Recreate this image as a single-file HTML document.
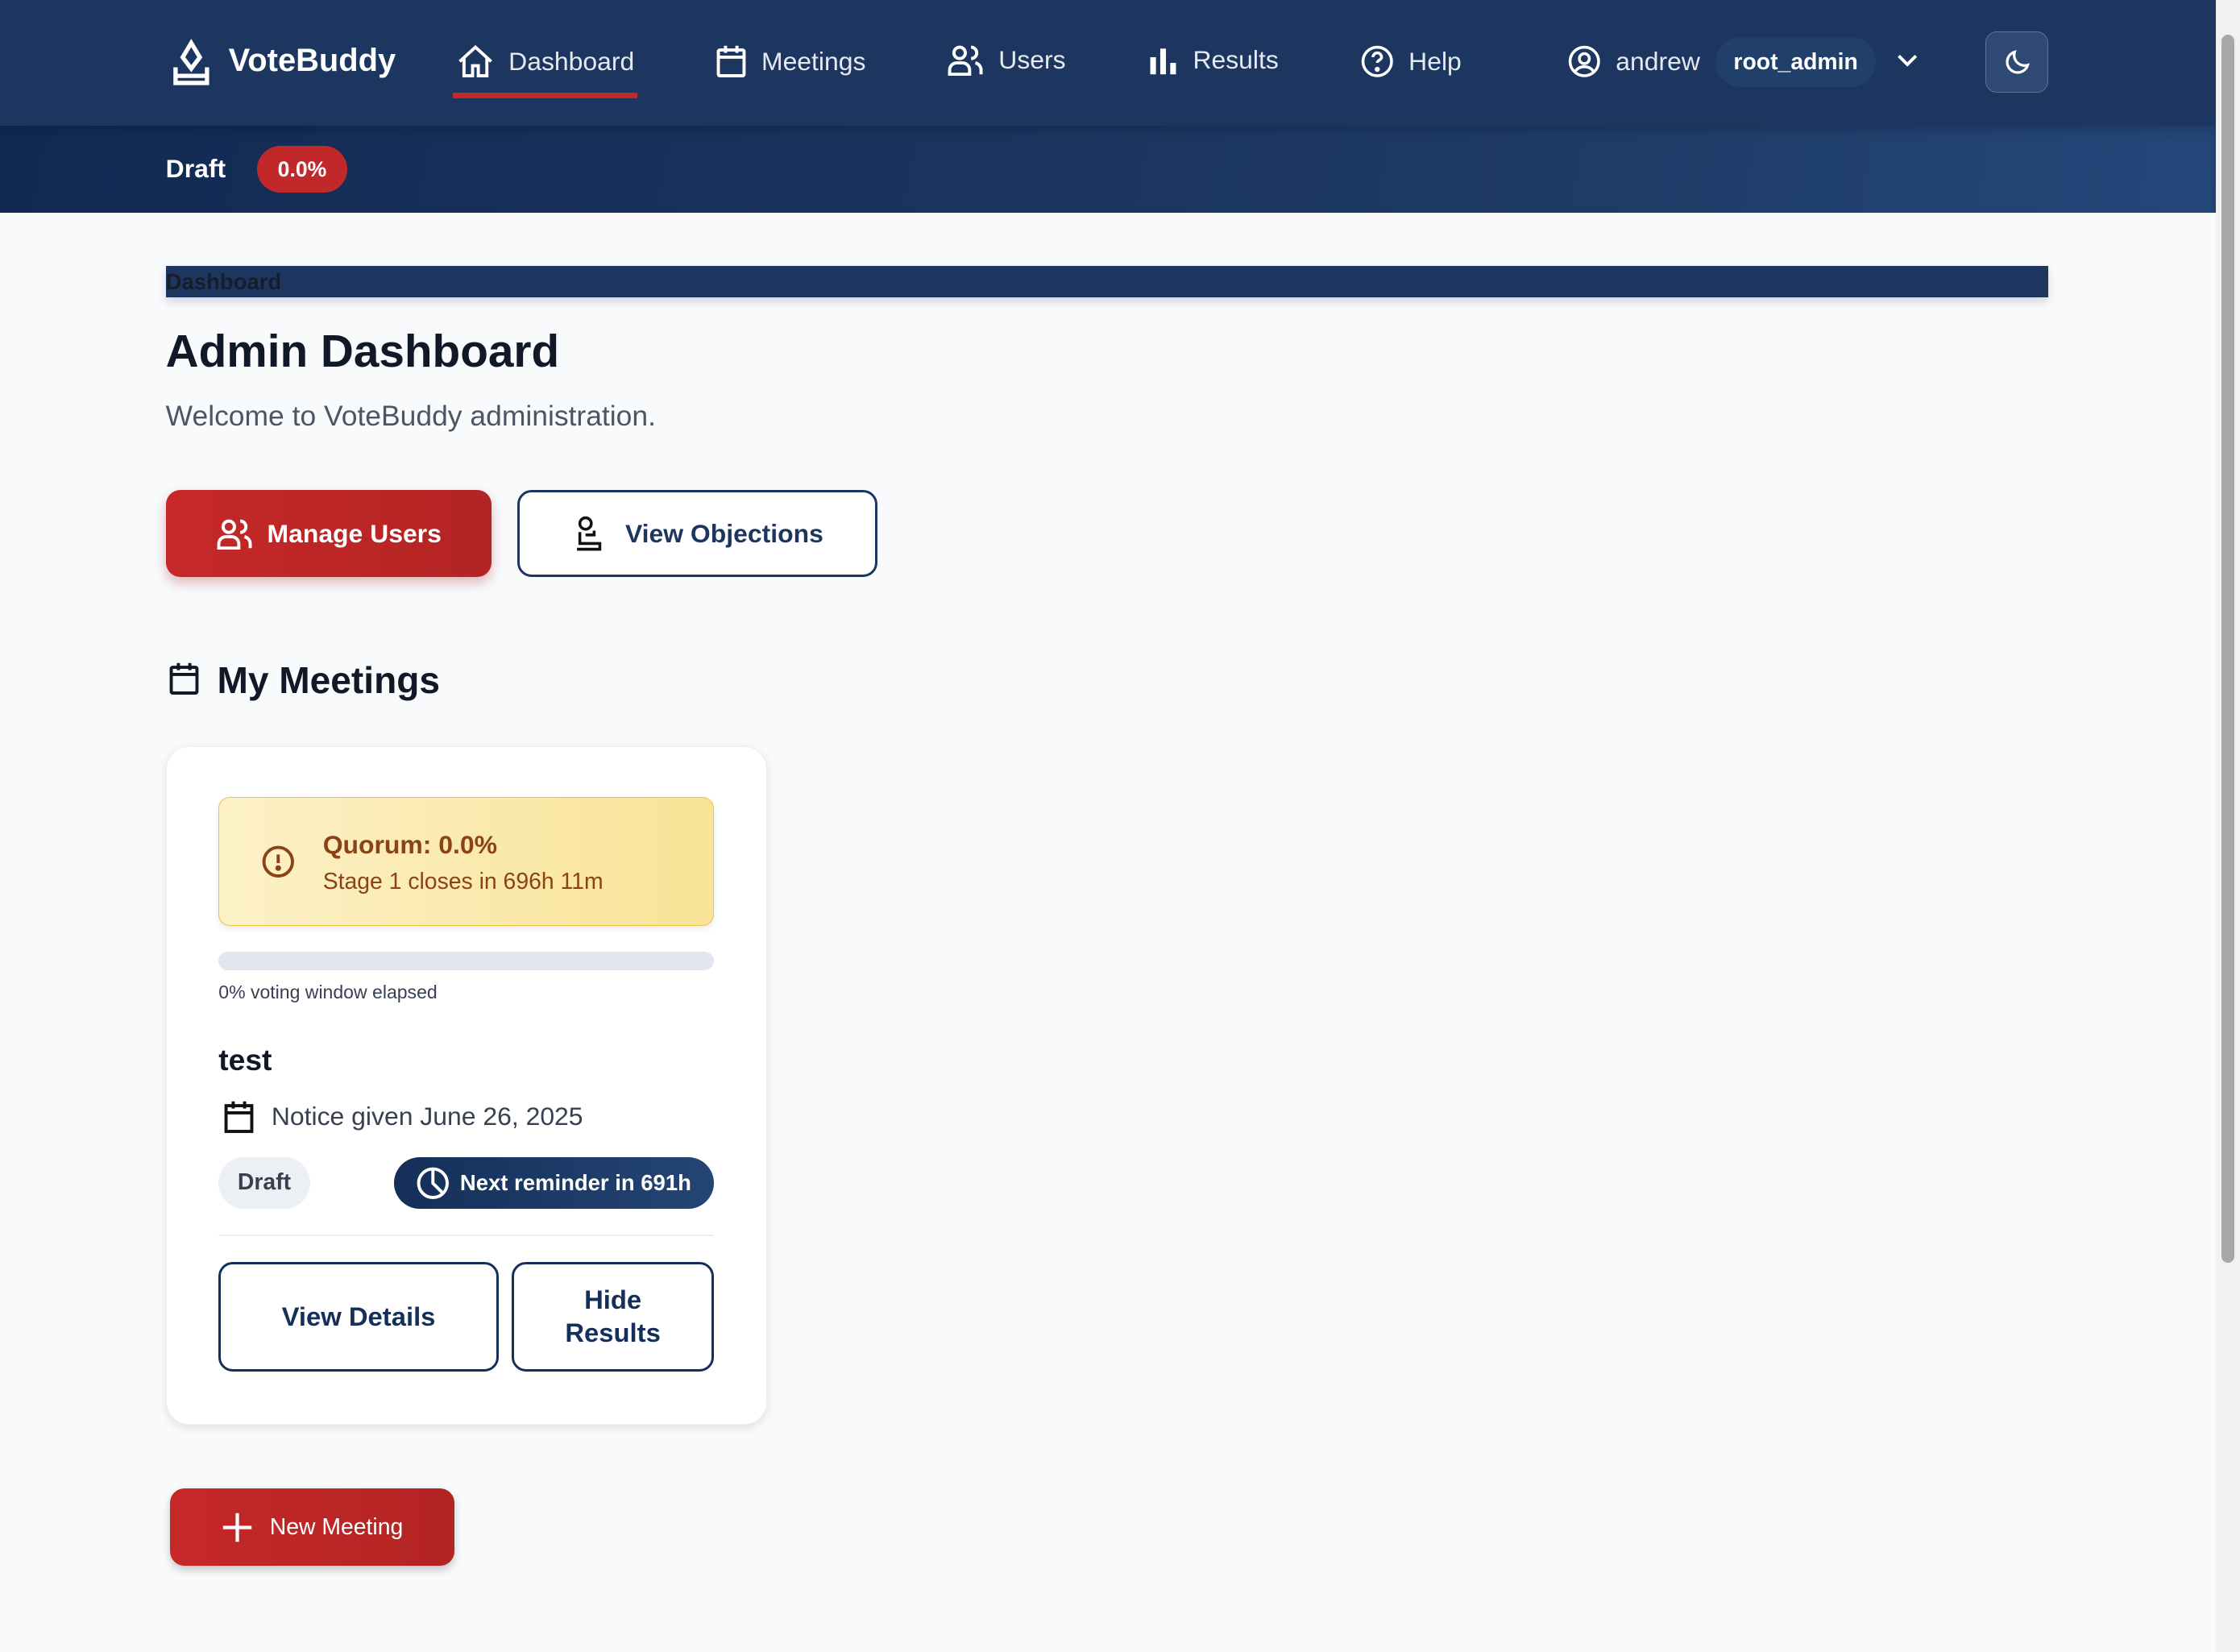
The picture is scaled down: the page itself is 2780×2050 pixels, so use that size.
<!DOCTYPE html>
<html><head><meta charset="utf-8"><style>
html{zoom:1.7730}
*{box-sizing:border-box;margin:0;padding:0}
body{width:1568px;height:1156px;overflow:hidden;background:#f8fafc;font-family:"Liberation Sans",sans-serif;position:relative}
.hdr{position:absolute;left:0;top:0;width:1551px;height:88px;background:#1d365f}
.sub{position:absolute;left:0;top:88px;width:1551px;height:61px;background:linear-gradient(100deg,#112a52,#1e3b66 70%,#24477a);box-shadow:inset 0 4px 6px rgba(0,0,0,.15)}
.abs{position:absolute}
.nav{color:#e5e9f0;font-size:18px;display:flex;align-items:center;gap:10px;top:31px}
svg{display:block}
.sb{position:absolute;left:1551px;top:0;width:17px;height:1156px;background:#f1f1f1}
.sb div{position:absolute;left:4px;top:24px;width:9px;height:860px;background:#a8a8a8;border-radius:5px}
.btn{position:absolute;border-radius:10px;display:flex;align-items:center;justify-content:center;font-weight:bold;font-size:18px}
</style></head><body>
<div class="hdr"></div>
<div class="sub"></div>
<div class="abs" style="left:118px;top:27px"><svg width="32" height="34" viewBox="0 0 32 34" fill="none" stroke="#fff" stroke-width="3"><path d="M16 3l6 10-6 8-6-8z"/><path d="M5 20v11h22V20"/><path d="M5 26h22"/></svg></div>
<div class="abs" style="left:160px;top:30px;color:#fff;font-weight:bold;font-size:22.5px">VoteBuddy</div>
<div class="abs nav" style="left:320px"><svg width="26" height="24" viewBox="0 0 26 24" fill="none" stroke="#fff" stroke-width="2.2"><path d="M2 12L13 2l11 10M5 10v12h6v-7h4v7h6V10"/></svg>Dashboard</div>
<div class="abs" style="left:317px;top:65px;width:129px;height:4px;background:#c62828"></div>
<div class="abs nav" style="left:501px"><svg width="22" height="24" viewBox="0 0 22 24" fill="none" stroke="#fff" stroke-width="2.2"><rect x="2" y="4" width="18" height="18" rx="1"/><path d="M2 9h18M7 1v5M15 1v5"/></svg>Meetings</div>
<div class="abs nav" style="left:663px"><svg width="26" height="22" viewBox="0 0 26 22" fill="none" stroke="#fff" stroke-width="2.2"><circle cx="9" cy="6" r="4"/><path d="M2 21v-3a5 5 0 015-5h4a5 5 0 015 5v3zM17 2a4 4 0 010 8M20 13a5 5 0 014 5v3"/></svg>Users</div>
<div class="abs nav" style="left:803px"><svg width="22" height="22" viewBox="0 0 22 22" fill="#fff"><rect x="2" y="9" width="4" height="12"/><rect x="9" y="3" width="4" height="18"/><rect x="16" y="13" width="4" height="8"/></svg>Results</div>
<div class="abs nav" style="left:952px"><svg width="24" height="24" viewBox="0 0 24 24" fill="none" stroke="#fff" stroke-width="2"><circle cx="12" cy="12" r="10"/><path d="M9 9a3 3 0 116 0c0 2-3 2-3 4"/><circle cx="12" cy="17.5" r=".8" fill="#fff"/></svg>Help</div>
<div class="abs nav" style="left:1097px"><svg width="24" height="24" viewBox="0 0 24 24" fill="none" stroke="#fff" stroke-width="2"><circle cx="12" cy="12" r="10"/><circle cx="12" cy="10" r="3.5"/><path d="M5.5 19a8 8 0 0113 0"/></svg>andrew</div>
<div class="abs" style="left:1201px;top:26px;width:112px;height:35px;border-radius:18px;background:#213f6b;color:#fff;font-weight:bold;font-size:16px;text-align:center;line-height:35px">root_admin</div>
<div class="abs" style="left:1327px;top:36px"><svg width="16" height="12" viewBox="0 0 16 12" fill="none" stroke="#fff" stroke-width="2.2"><path d="M2 3l6 6 6-6"/></svg></div>
<div class="abs" style="left:1390px;top:22px;width:44px;height:43px;border:1px solid #5c7396;border-radius:8px;background:#2e4a74;display:flex;align-items:center;justify-content:center"><svg width="22" height="22" viewBox="0 0 24 24" fill="none" stroke="#fff" stroke-width="2"><path d="M20 14A8 8 0 0110 4a8 8 0 1010 10z"/></svg></div>
<div class="abs" style="left:116px;top:108px;color:#fff;font-weight:bold;font-size:18px">Draft</div>
<div class="abs" style="left:180px;top:102px;width:63px;height:33px;border-radius:17px;background:#c0282a;color:#fff;font-weight:bold;font-size:15px;text-align:center;line-height:33px">0.0%</div>
<div class="abs" style="left:116px;top:186px;width:1318px;height:22px;background:#1d365f;box-shadow:0 3px 6px rgba(0,0,0,.15);color:#151e2b;font-size:15.5px;line-height:22px;font-weight:bold">Dashboard</div>
<div class="abs" style="left:116px;top:228px;font-size:32px;font-weight:bold;color:#111827">Admin Dashboard</div>
<div class="abs" style="left:116px;top:280px;font-size:20px;color:#4b5563">Welcome to VoteBuddy administration.</div>
<div class="btn" style="left:116px;top:343px;width:228px;height:61px;background:linear-gradient(90deg,#c62828,#b32424);color:#fff;box-shadow:0 4px 8px rgba(180,30,30,.3);gap:10px"><svg width="26" height="22" viewBox="0 0 26 22" fill="none" stroke="#fff" stroke-width="2.2"><circle cx="9" cy="6" r="4"/><path d="M2 21v-3a5 5 0 015-5h4a5 5 0 015 5v3zM17 2a4 4 0 010 8M20 13a5 5 0 014 5v3"/></svg>Manage Users</div>
<div class="btn" style="left:362px;top:343px;width:252px;height:61px;border:2px solid #1d365f;background:#fff;color:#1d365f;gap:12px"><svg width="26" height="26" viewBox="0 0 26 26" fill="none" stroke="#111" stroke-width="2"><circle cx="10" cy="6" r="4"/><path d="M6 12v8h14v4H4M10 14h6v-3"/></svg>View Objections</div>
<div class="abs" style="left:118px;top:463px"><svg width="22" height="24" viewBox="0 0 22 24" fill="none" stroke="#111827" stroke-width="2.2"><rect x="2" y="4" width="18" height="18" rx="1"/><path d="M2 9h18M7 1v5M15 1v5"/></svg></div>
<div class="abs" style="left:152px;top:461px;font-size:26px;font-weight:bold;color:#111827">My Meetings</div>
<div class="abs" style="left:116px;top:522px;width:421px;height:475px;background:#fff;border-radius:16px;box-shadow:0 2px 6px rgba(0,0,0,.1);border:1px solid #eef0f3"></div>
<div class="abs" style="left:153px;top:558px;width:347px;height:90px;border:1px solid #efc24e;border-radius:8px;background:linear-gradient(90deg,#fcf1c8,#f9e396);box-shadow:0 2px 4px rgba(0,0,0,.08)"></div>
<div class="abs" style="left:183px;top:591px"><svg width="24" height="24" viewBox="0 0 24 24" fill="none" stroke="#8a4314" stroke-width="2.2"><circle cx="12" cy="12" r="10"/><path d="M12 7v6"/><circle cx="12" cy="16.5" r=".9" fill="#8a4314"/></svg></div>
<div class="abs" style="left:226px;top:581px;font-size:18px;font-weight:bold;color:#8a4314">Quorum: 0.0%</div>
<div class="abs" style="left:226px;top:608px;font-size:16px;color:#8a4314">Stage 1 closes in 696h 11m</div>
<div class="abs" style="left:153px;top:666px;width:347px;height:13px;background:#e2e6ee;border-radius:7px"></div>
<div class="abs" style="left:153px;top:687px;font-size:13px;color:#374151">0% voting window elapsed</div>
<div class="abs" style="left:153px;top:730px;font-size:21px;font-weight:bold;color:#111827">test</div>
<div class="abs" style="left:156px;top:770px"><svg width="22" height="24" viewBox="0 0 22 24" fill="none" stroke="#111" stroke-width="2.2"><rect x="2" y="4" width="18" height="18"/><path d="M2 9h18M7 1v5M15 1v5"/></svg></div>
<div class="abs" style="left:190px;top:771px;font-size:18px;color:#374151">Notice given June 26, 2025</div>
<div class="abs" style="left:153px;top:810px;width:64px;height:36px;border-radius:18px;background:#eceff4;color:#374151;font-weight:bold;font-size:16px;text-align:center;line-height:36px">Draft</div>
<div class="abs" style="left:276px;top:810px;width:224px;height:36px;border-radius:18px;background:linear-gradient(90deg,#142f59,#244575);color:#fff;font-weight:bold;font-size:15.5px;display:flex;align-items:center;gap:7px;padding-left:15px"><svg width="24" height="24" viewBox="0 0 24 24" fill="none" stroke="#fff" stroke-width="2.2"><circle cx="12" cy="12" r="10"/><path d="M12 2v10l7 7"/></svg>Next reminder in 691h</div>
<div class="abs" style="left:153px;top:864px;width:347px;height:1px;background:#eceff3"></div>
<div class="btn" style="left:153px;top:883px;width:196px;height:77px;border:2px solid #142f59;background:#fff;color:#142f59;font-size:18.5px">View Details</div>
<div class="btn" style="left:358px;top:883px;width:142px;height:77px;border:2px solid #142f59;background:#fff;color:#142f59;font-size:18.5px;text-align:center;line-height:23px">Hide<br>Results</div>
<div class="btn" style="left:119px;top:1042px;width:199px;height:54px;background:linear-gradient(90deg,#c62828,#b32424);color:#fff;font-weight:normal;font-size:16px;gap:12px;box-shadow:0 3px 6px rgba(0,0,0,.2)"><svg width="22" height="22" viewBox="0 0 22 22" stroke="#fff" stroke-width="2.4"><path d="M11 1v20M1 11h20"/></svg>New Meeting</div>
<div class="sb"><div></div></div>
</body></html>
